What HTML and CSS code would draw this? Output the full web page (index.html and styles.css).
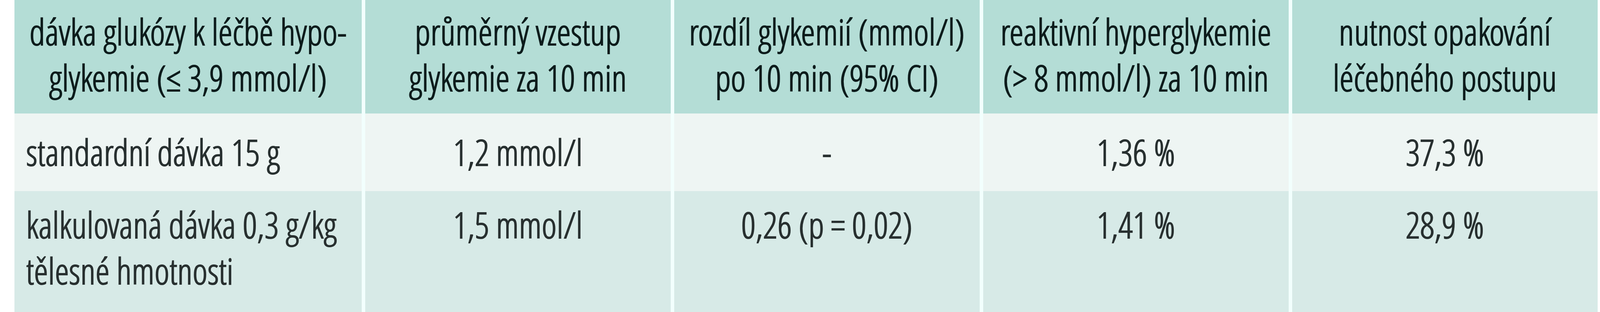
FILE: index.html
```html
<!DOCTYPE html>
<html lang="cs">
<head>
<meta charset="utf-8">
<title>Dávka glukózy k léčbě hypoglykemie</title>
<link rel="stylesheet" href="styles.css">
</head>
<body>
<div class="table">
  <div class="cell head">dávka glukózy k léčbě hypo-<br>glykemie (≤ 3,9 mmol/l)</div>
  <div class="cell head">průměrný vzestup<br>glykemie za 10 min</div>
  <div class="cell head">rozdíl glykemií (mmol/l)<br>po 10 min (95% CI)</div>
  <div class="cell head">reaktivní hyperglykemie<br>(&gt; 8 mmol/l) za 10 min</div>
  <div class="cell head">nutnost opakování<br>léčebného postupu</div>

  <div class="cell r1 first">standardní dávka 15 g</div>
  <div class="cell r1">1,2 mmol/l</div>
  <div class="cell r1">-</div>
  <div class="cell r1">1,36 %</div>
  <div class="cell r1">37,3 %</div>

  <div class="cell r2 first">kalkulovaná dávka 0,3 g/kg<br>tělesné hmotnosti</div>
  <div class="cell r2">1,5 mmol/l</div>
  <div class="cell r2">0,26 (p = 0,02)</div>
  <div class="cell r2">1,41 %</div>
  <div class="cell r2">28,9 %</div>
</div>
</body>
</html>
```

FILE: styles.css
```css
html, body {
  margin: 0;
  padding: 0;
  background: #ffffff;
}

body {
  font-family: "Open Sans Condensed Light", "Open Sans", sans-serif;
  font-stretch: 75%;
  font-weight: 300;
  font-size: 92px;
  line-height: 118px;
  height: 800px;
  overflow: hidden;
}

.table {
  display: grid;
  grid-template-columns: 21.93% repeat(4, 1fr);
  grid-template-rows: 291px 199px 310px;
  column-gap: 9px;
  width: 98.95%;
  margin-left: 0.9%;
  background: #f2fffd;
}

.cell {
  white-space: nowrap;
  text-align: center;
  box-sizing: border-box;
  min-width: 0;
  -webkit-text-stroke: 2px currentColor;
}

.head {
  background: #b4ddd6;
  color: #0d1c1c;
  padding-top: 22px;
}

.r1 {
  background: #eef5f3;
  color: #283030;
  padding-top: 40px;
}

.r2 {
  background: #d7eae7;
  color: #283030;
  padding-top: 27px;
}

.first {
  text-align: left;
  padding-left: 30px;
}
```
